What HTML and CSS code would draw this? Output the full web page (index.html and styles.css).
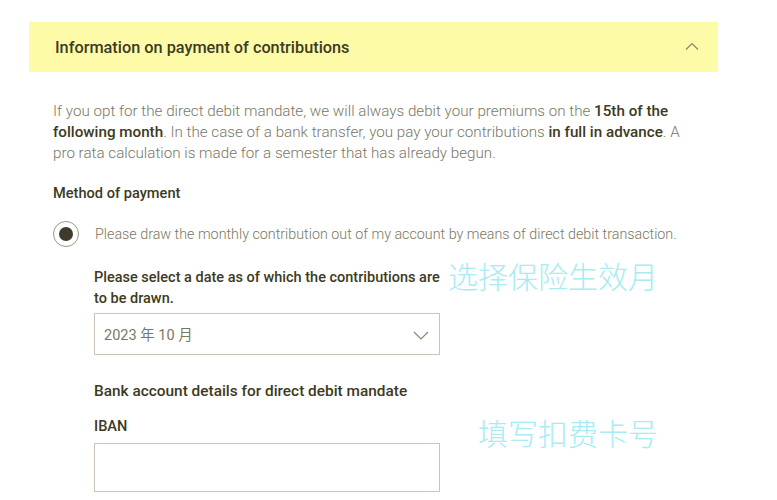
FILE: index.html
```html
<!DOCTYPE html>
<html lang="en">
<head>
<meta charset="utf-8">
<link rel="stylesheet" href="styles.css">
</head>
<body>
<div class="page">
  <div class="accordion-head">
    <span class="accordion-title">Information on payment of contributions</span>
    <svg class="chev" width="14" height="8" viewBox="0 0 14 8"><path d="M1 7.5 L7 1.5 L13 7.5" fill="none" stroke="#8a8670" stroke-width="1.2"/></svg>
  </div>
  <div class="content">
    <p class="intro">If you opt for the direct debit mandate, we will always debit your premiums on the <b>15th of the following month</b>. In the case of a bank transfer, you pay your contributions <b>in full in advance</b>. A pro rata calculation is made for a semester that has already begun.</p>
    <div class="label">Method of payment</div>
    <div class="radio-row">
      <span class="radio"><span class="dot"></span></span>
      <span class="radio-text">Please draw the monthly contribution out of my account by means of direct debit transaction.</span>
    </div>
    <div class="sub">
      <div class="field-row">
        <div class="field">
          <div class="label narrow">Please select a date as of which the contributions are to be drawn.</div>
          <div class="select">
            <span class="select-value">2023 年 10 月</span>
            <svg width="16" height="9" viewBox="0 0 16 9"><path d="M1 1 L8 8 L15 1" fill="none" stroke="#8a8670" stroke-width="1.2"/></svg>
          </div>
        </div>
        <div class="note note-date">选择保险生效月</div>
      </div>
      <div class="label bank">Bank account details for direct debit mandate</div>
      <div class="field-row">
        <div class="field">
          <div class="label iban">IBAN</div>
          <div class="input"></div>
        </div>
        <div class="note note-iban">填写扣费卡号</div>
      </div>
    </div>
  </div>
</div>
</body>
</html>
```
FILE: styles.css
```css
html, body {
  margin: 0;
  padding: 0;
  background: #ffffff;
}
body {
  font-family: Roboto, "Noto Sans CJK SC", sans-serif;
  color: #7b7764;
  width: 777px;
  height: 500px;
  overflow: hidden;
}
.page {
  padding: 22px 0 0 29px;
}
.accordion-head {
  width: 689px;
  height: 50px;
  background: #fefba8;
  display: flex;
  align-items: center;
  justify-content: space-between;
  box-sizing: border-box;
  padding: 0 19px 0 26px;
}
.accordion-title {
  font-size: 16.3px;
  font-weight: 500;
  color: #3d3a22;
}
.chev {
  margin-top: -3px;
}
.content {
  padding: 0 0 0 24px;
}
.intro {
  margin: 29px 0 0;
  width: 640px;
  font-size: 15.2px;
  font-weight: 300;
  line-height: 21px;
}
.intro b {
  font-weight: 500;
  color: #3d3a22;
}
.label {
  font-size: 14.6px;
  font-weight: 500;
  color: #3d3a22;
  line-height: 21px;
}
.content > .label {
  margin-top: 19px;
}
.radio-row {
  display: flex;
  align-items: center;
  margin-top: 17px;
}
.radio {
  width: 26px;
  height: 26px;
  border: 1px solid #9a9786;
  border-radius: 50%;
  box-sizing: border-box;
  display: flex;
  align-items: center;
  justify-content: center;
}
.dot {
  width: 14px;
  height: 14px;
  border-radius: 50%;
  background: #3f3a2c;
}
.radio-text {
  margin-left: 16px;
  font-size: 14.3px;
  font-weight: 300;
}
.sub {
  padding-left: 41px;
  margin-top: 20px;
}
.field-row {
  display: flex;
  align-items: flex-start;
}
.field {
  width: 346px;
}
.narrow {
  width: 346px;
  font-size: 14.5px;
}
.select {
  margin-top: 4px;
  height: 42px;
  border: 1px solid #c9c6b8;
  box-sizing: border-box;
  display: flex;
  align-items: center;
  justify-content: space-between;
  padding: 0 10px 0 9px;
}
.select svg {
  margin-top: 3px;
}
.select-value {
  font-size: 14.5px;
  font-weight: 400;
  color: #7b7764;
  margin-top: -2px;
}
.note {
  color: #a6ecf2;
  font-family: "Noto Sans CJK SC", sans-serif;
  font-weight: 300;
  font-size: 30px;
  line-height: 36px;
}
.note-date {
  margin-left: 8px;
  margin-top: -10px;
}
.note-iban {
  margin-left: 38px;
  margin-top: 12px;
}
.bank {
  margin-top: 26px;
  font-size: 15.4px;
}
.iban {
  margin-top: 14px;
}
.input {
  margin-top: 6px;
  height: 49px;
  border: 1px solid #c9c6b8;
  box-sizing: border-box;
}
```
